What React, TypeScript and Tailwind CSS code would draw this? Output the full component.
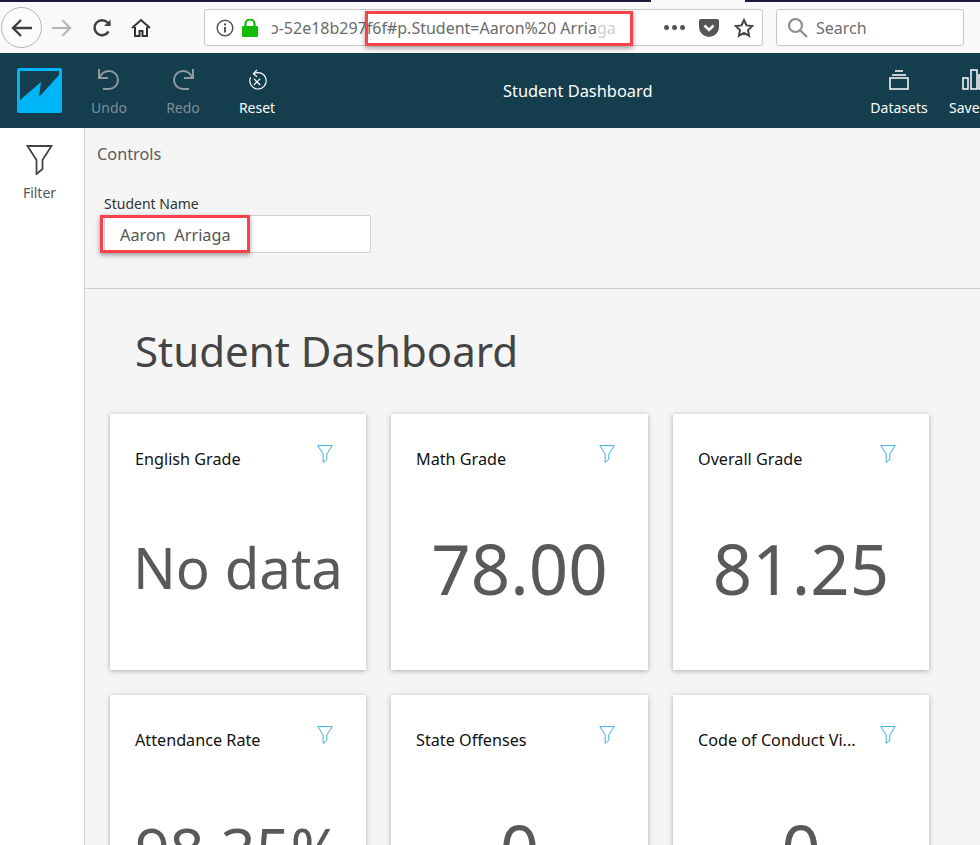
import React from "react";

function Funnel({ className, sw = 1.5 }: { className?: string; sw?: number }) {
  return (
    <svg viewBox="0 0 26 30" className={className} fill="none" stroke="currentColor" strokeWidth={sw}>
      <path d="M1 1 H25 L16 15 V24 L10 29 V15 Z" strokeLinejoin="miter" />
    </svg>
  );
}

function Card({ title, value, size }: { title: string; value: string; size: string }) {
  return (
    <div className="h-[256px] w-full bg-white shadow-[0_1px_5px_rgba(0,0,0,0.3)]">
      <div className="flex items-start justify-between pl-[25px] pr-[33px] pt-[33px]">
        <span className="text-[16.2px] leading-[24px] whitespace-nowrap text-[#111]">{title}</span>
        <Funnel className="mt-[-2px] h-[18px] w-[16px] text-[#35ace0]" sw={1.6} />
      </div>
      <div className={`mt-[57px] text-center whitespace-nowrap leading-[80px] text-[#58595b] ${size}`}>{value}</div>
    </div>
  );
}

export default function App() {
  return (
    <div className="relative flex h-[845px] w-[980px] flex-col overflow-hidden bg-[#f5f5f5] font-['Noto_Sans','Open_Sans',sans-serif]">
      {/* tab strip */}
      <div className="flex h-[2px] shrink-0 bg-[#1a1a3a]">
        <div className="ml-[651px] h-full w-[94px] bg-[#f9f9fa]" />
      </div>
      {/* browser toolbar */}
      <div className="flex h-[51px] shrink-0 items-center bg-[#f9f9fa]">
        <div className="ml-px flex h-[41px] w-[41px] items-center justify-center rounded-full border border-[#b5b5b5] bg-[#fbfbfb]">
          <svg width="22" height="20" viewBox="0 0 22 20" fill="none" stroke="#3f3f3f" strokeWidth="2.4"><path d="M21 10H2M10 2 2 10l8 8" /></svg>
        </div>
        <svg className="ml-[9px]" width="21" height="20" viewBox="0 0 22 20" fill="none" stroke="#b3b3b3" strokeWidth="2.2"><path d="M1 10h19M12 2l8 8-8 8" /></svg>
        <svg className="ml-[20px]" width="20" height="20" viewBox="0 0 20 20" fill="none" stroke="#404040" strokeWidth="2.5"><path d="M16.5 13.5A7.5 7.5 0 1 1 15.5 4.5L18 7" /><path d="M18.5 1.5V8H12Z" fill="#404040" stroke="none" /></svg>
        <svg className="ml-[19px]" width="20" height="20" viewBox="0 0 20 20" fill="none" stroke="#333" strokeWidth="2"><path d="M1 10 10 2l9 8" /><path d="M4 9v9h4.500v-5h3v5H16V9" /></svg>
        <div className="ml-[53px] flex h-[37px] w-[559px] items-center rounded-[3px] border border-[#c8c8c8] bg-white">
          <svg className="ml-[11px]" width="18" height="18" viewBox="0 0 18 18" fill="none" stroke="#555" strokeWidth="1.5"><circle cx="9" cy="9" r="7.800" /><path d="M9 8v5.500" strokeWidth="2" /><path d="M9 4.500v2" strokeWidth="2" /></svg>
          <svg className="ml-[8px]" width="16" height="18" viewBox="0 0 16 18"><rect x="0" y="7" width="16" height="11" rx="1" fill="#12bc00" /><path d="M3.500 8V5a4.500 4.500 0 0 1 9 0v3" fill="none" stroke="#12bc00" strokeWidth="2.200" /></svg>
          <span className="ml-[13px] w-[350px] overflow-hidden whitespace-nowrap text-[16px] text-[#6b6b6b]">
            ɔ-52e18b297f6f#p.Student=Aaron%20 Arria<span className="text-[#cfcfcf]">ga</span>
          </span>
          <div className="flex-1" />
          <span className="flex gap-[3px]">
            <i className="h-[5px] w-[5px] rounded-full bg-[#555]" />
            <i className="h-[5px] w-[5px] rounded-full bg-[#555]" />
            <i className="h-[5px] w-[5px] rounded-full bg-[#555]" />
          </span>
          <svg className="ml-[14px]" width="20" height="18" viewBox="0 0 20 18"><path d="M2 0h16a2 2 0 0 1 2 2v6a10 10 0 0 1-20 0V2a2 2 0 0 1 2-2Z" fill="#555" /><path d="M5.500 6.500 10 11l4.500-4.500" fill="none" stroke="#fff" strokeWidth="2.600" /></svg>
          <svg className="ml-[15px] mr-[8px]" width="20" height="20" viewBox="0 0 20 20" fill="none" stroke="#444" strokeWidth="2"><path d="M10 2l2.500 5.400 5.700.7-4.200 4 1.100 5.800L10 15l-5.100 2.900L6 12.100l-4.200-4 5.700-.7Z" /></svg>
        </div>
        <div className="ml-[13px] flex h-[37px] w-[188px] items-center rounded-[3px] border border-[#c8c8c8] bg-white">
          <svg className="ml-[10px]" width="21" height="21" viewBox="0 0 21 21" fill="none" stroke="#8c8c8c" strokeWidth="2.200"><circle cx="8.500" cy="8.500" r="6.500" /><path d="M13.500 13.500 20 20" /></svg>
          <span className="ml-[8px] text-[16px] text-[#6e6e6e]">Search</span>
        </div>
      </div>
      {/* app bar */}
      <div className="relative flex h-[75px] shrink-0 items-stretch bg-[#143d4e] text-[14px] text-white">
        <div className="ml-[17px] mt-[15px] h-[45px] w-[45px] rounded-[2px] bg-[#00b5f5]">
          <svg viewBox="0 0 45 45" width="45" height="45"><path d="M3 3H42V7L22 29 24 14 3 32Z" fill="#143d4e" /></svg>
        </div>
        <div className="ml-[29px] flex w-[36px] flex-col items-center pt-[15px] text-[#7f8f96]">
          <svg width="24" height="24" viewBox="0 0 24 24" fill="none" stroke="#8f9a9f" strokeWidth="2"><path d="M2 1v9h9" /><path d="M2.500 10C4.500 5 8 3 12 3a9 9 0 0 1 0 18H6" /></svg>
          <span className="mt-[5px]">Undo</span>
        </div>
        <div className="ml-[38px] flex w-[36px] flex-col items-center pt-[15px] text-[#7f8f96]">
          <svg width="24" height="24" viewBox="0 0 24 24" fill="none" stroke="#8f9a9f" strokeWidth="2"><path d="M22 1v9h-9" /><path d="M21.500 10C19.500 5 16 3 12 3a9 9 0 0 0 0 18h6" /></svg>
          <span className="mt-[5px]">Redo</span>
        </div>
        <div className="ml-[38px] flex w-[36px] flex-col items-center pt-[15px]">
          <svg width="20" height="24" viewBox="0 0 22 24" fill="none" stroke="#fff" strokeWidth="1.300"><path d="M7 5.500A9 9 0 1 1 4 9" /><path d="M11 1 7 5l4 3.500" /><path d="M7.500 10.500l7 7M14.500 10.500l-7 7" /></svg>
          <span className="mt-[5px]">Reset</span>
        </div>
        <div className="absolute left-[503px] top-[26px] text-[16.4px] leading-[24px] whitespace-nowrap">Student Dashboard</div>
        <div className="absolute left-[870px] top-[15px] flex w-[58px] flex-col items-center">
          <svg width="22" height="24" viewBox="0 0 22 24" fill="none" stroke="#fff" strokeWidth="1.500"><path d="M7 3h8M4 7h14" /><rect x="2" y="10" width="18" height="11" /></svg>
          <span className="mt-[5px]">Datasets</span>
        </div>
        <div className="absolute left-[949px] top-[15px] flex flex-col items-start">
          <svg className="ml-[13px]" width="30" height="24" viewBox="0 0 30 24" fill="none" stroke="#fff" strokeWidth="1.500"><rect x="1" y="10" width="5" height="11" /><rect x="9" y="2" width="6" height="19" /><rect x="17" y="7" width="5" height="14" /></svg>
          <span className="mt-[5px]">Save</span>
        </div>
      </div>
      {/* body */}
      <div className="flex min-h-0 flex-1">
        <aside className="flex w-[85px] shrink-0 flex-col items-center border-r border-[#cfcfcf] bg-white pt-[17px]">
          <Funnel className="mr-[5px] h-[30px] w-[27px] text-[#444]" sw={1.800} />
          <span className="mr-[5px] mt-[9px] text-[14px] leading-[18px] text-[#555]">Filter</span>
        </aside>
        <main className="min-w-0 flex-1">
          <section className="h-[161px] border-b border-[#cfcfcf] pl-[12px] pt-[14px]">
            <div className="text-[16.3px] leading-[24px] text-[#5a5a5a]">Controls</div>
            <div className="ml-[7px] mt-[29px] text-[14px] leading-[18px] text-[#333]">Student Name</div>
            <div className="ml-[7px] mt-[2px] flex h-[38px] w-[267px] items-center rounded-[2px] border border-[#d0d0d0] bg-white pl-[15px] pt-[2px] text-[16.300px] text-[#555] whitespace-pre">Aaron  Arriaga</div>
          </section>
          <h1 className="ml-[50px] mt-[32px] text-[42px] leading-[60px] whitespace-nowrap text-[#444]">Student Dashboard</h1>
          <div className="ml-[25px] mt-[33px] grid w-[819px] grid-cols-[256px_257px_256px] gap-[25px]">
            <Card title="English Grade" value="No data" size="text-[56.4px]" />
            <Card title="Math Grade" value="78.00" size="text-[69px]" />
            <Card title="Overall Grade" value="81.25" size="text-[69px]" />
            <Card title="Attendance Rate" value="98.35%" size="text-[61px]" />
            <Card title="State Offenses" value="0" size="text-[69px]" />
            <Card title="Code of Conduct Vi..." value="0" size="text-[69px]" />
          </div>
        </main>
      </div>
      {/* annotation boxes */}
      <div className="absolute left-[365px] top-[11px] h-[35px] w-[268px] border-[3px] border-[#f8414a] shadow-[0_2px_5px_rgba(0,0,0,0.4)]" />
      <div className="absolute left-[100px] top-[215px] h-[38px] w-[150px] border-[3px] border-[#f8414a] shadow-[0_2px_5px_rgba(0,0,0,0.4)]" />
    </div>
  );
}
